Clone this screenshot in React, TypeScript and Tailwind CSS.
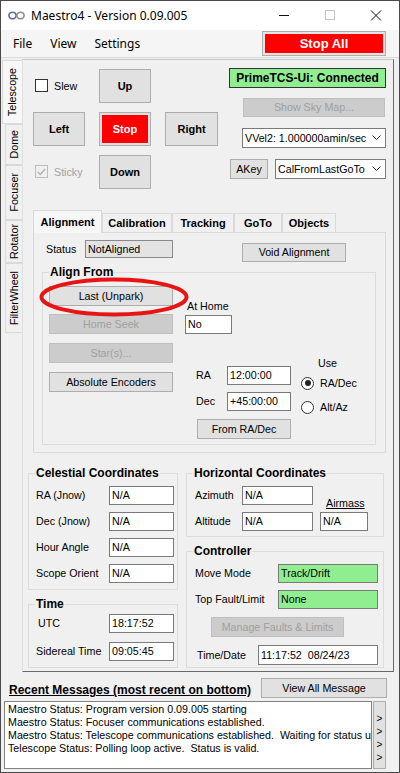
import type { ReactNode } from "react";

const ui = "font-['Liberation_Sans',Arial,sans-serif]";
const seg = "font-['Noto_Sans','Open_Sans',sans-serif]";

function Btn({
  children,
  className = "",
  disabled,
  bold,
}: {
  children: ReactNode;
  className?: string;
  disabled?: boolean;
  bold?: boolean;
}) {
  const tone = disabled
    ? "bg-[#cccccc] border-[#bfbfbf] text-[#a0a0a0]"
    : "bg-[#e1e1e1] border-[#adadad] text-black";
  return (
    <button
      type="button"
      className={`flex shrink-0 items-center justify-center border leading-none ${bold ? "text-[11px] font-bold" : "text-[10.7px]"} ${tone} ${className}`}
    >
      {children}
    </button>
  );
}

function Box({
  children,
  className = "",
}: {
  children: ReactNode;
  className?: string;
}) {
  return (
    <div
      className={`flex shrink-0 items-center overflow-hidden whitespace-nowrap border border-[#7a7a7a] bg-white pl-[2px] text-[10.7px] ${className}`}
    >
      {children}
    </div>
  );
}

function Chevron() {
  return (
    <svg width="9" height="6" viewBox="0 0 9 6" className="ml-auto mr-[4px] shrink-0">
      <path d="M0.5 0.5 L4.5 4.5 L8.5 0.5" fill="none" stroke="#333" strokeWidth="1" />
    </svg>
  );
}

function Combo({ text, className = "" }: { text: string; className?: string }) {
  return (
    <Box className={className}>
      <span>{text}</span>
      <Chevron />
    </Box>
  );
}

function Group({
  title,
  className = "",
  children,
}: {
  title: string;
  className?: string;
  children: ReactNode;
}) {
  return (
    <fieldset className={`shrink-0 border border-[#dcdcdc] ${className}`}>
      <legend className="ml-[6px] px-[1px] text-[12px] font-bold leading-[14px]">
        {title}
      </legend>
      {children}
    </fieldset>
  );
}

function Row({
  label,
  labelW,
  ml,
  children,
  className = "",
}: {
  label: string;
  labelW: string;
  ml: string;
  children: ReactNode;
  className?: string;
}) {
  return (
    <div className={`flex items-center ${className}`}>
      <span className={`${ml} ${labelW} shrink-0 text-[10.7px]`}>{label}</span>
      {children}
    </div>
  );
}

function Check({ label, checked, disabled }: { label: string; checked?: boolean; disabled?: boolean }) {
  return (
    <div className={`flex items-center ${disabled ? "text-[#a0a0a0]" : ""}`}>
      <div
        className={`flex h-[13px] w-[13px] items-center justify-center border ${disabled ? "border-[#bcbcbc] bg-[#f0f0f0]" : "border-[#333] bg-white"}`}
      >
        {checked && (
          <svg width="9" height="8" viewBox="0 0 9 8">
            <path d="M0.8 4 L3.3 6.5 L8.2 1" fill="none" stroke={disabled ? "#b0b0b0" : "#333"} strokeWidth="1.4" />
          </svg>
        )}
      </div>
      <span className="ml-[6px] text-[10.7px]">{label}</span>
    </div>
  );
}

function Radio({ label, checked }: { label: string; checked?: boolean }) {
  return (
    <div className="flex h-[14px] items-center">
      <div className="flex h-[13px] w-[13px] items-center justify-center rounded-full border border-[#333] bg-white">
        {checked && <div className="h-[6px] w-[6px] rounded-full bg-[#222]" />}
      </div>
      <span className="ml-[6px] text-[10.7px]">{label}</span>
    </div>
  );
}

function SideTab({ label, h, selected }: { label: string; h: string; selected?: boolean }) {
  return (
    <div
      className={`flex shrink-0 items-center justify-center border border-r-0 border-[#d9d9d9] ${h} ${selected ? "w-[20px] bg-[#f7f7f7]" : "ml-[3px] w-[17px] bg-[#f0f0f0]"}`}
    >
      <span className="rotate-180 text-[10.7px] leading-none [writing-mode:vertical-rl]">{label}</span>
    </div>
  );
}

function TopTab({ label, w, selected }: { label: string; w: string; selected?: boolean }) {
  return (
    <div
      className={`flex shrink-0 items-center justify-center border border-b-0 border-[#d9d9d9] text-[11px] font-bold ${w} ${selected ? "relative z-10 -mb-px h-[23px] bg-[#f7f7f7]" : "h-[19px] bg-[#f0f0f0]"}`}
    >
      {label}
    </div>
  );
}

export default function App() {
  return (
    <div className={`flex h-[773px] w-[400px] flex-col overflow-hidden border border-[#4a4a4a] bg-[#f0f0f0] text-black ${ui}`}>
      {/* title bar */}
      <div className={`flex h-[29px] shrink-0 items-center bg-white ${seg}`}>
        <svg width="18" height="9" viewBox="0 0 18 9" className="ml-[7px]">
          <ellipse cx="4.5" cy="4.5" rx="3.6" ry="3.3" fill="none" stroke="#5d6f92" strokeWidth="1.6" />
          <ellipse cx="12.5" cy="4.5" rx="3.6" ry="3.3" fill="none" stroke="#8a8f99" strokeWidth="1.6" />
        </svg>
        <span className="ml-[5px] text-[12px]">Maestro4 - Version 0.09.005</span>
        <div className="ml-auto flex h-full items-center">
          <svg width="46" height="29" viewBox="0 0 46 29">
            <path d="M18 14.5 H28" stroke="#111" strokeWidth="1" />
          </svg>
          <svg width="46" height="29" viewBox="0 0 46 29">
            <rect x="18.5" y="9.5" width="9" height="9" fill="none" stroke="#c4c4c4" strokeWidth="1" />
          </svg>
          <svg width="46" height="29" viewBox="0 0 46 29">
            <path d="M18 9.5 L28 19.5 M28 9.5 L18 19.5" stroke="#111" strokeWidth="1" />
          </svg>
        </div>
      </div>

      {/* menu bar */}
      <div className={`flex h-[28px] shrink-0 items-center border-b border-[#dadada] bg-[#f5f5f5] text-[12px] ${seg}`}>
        <span className="ml-[12px]">File</span>
        <span className="ml-[18px]">View</span>
        <span className="ml-[18px]">Settings</span>
        <div className={`ml-auto mr-[13px] flex h-[25px] w-[124px] items-center border border-[#adadad] bg-[#e5e5e5] p-[2px] ${ui}`}>
          <div className="flex h-full w-full items-center justify-center bg-[#ff0000] text-[13px] font-bold text-white">
            Stop All
          </div>
        </div>
      </div>

      {/* body */}
      <div className="flex h-[614px] shrink-0 pt-px">
        <div className="flex w-[21px] shrink-0 flex-col pl-px pt-px">
          <SideTab label="Telescope" h="h-[64px]" selected />
          <SideTab label="Dome" h="h-[41px]" />
          <SideTab label="Focuser" h="h-[55px]" />
          <SideTab label="Rotator" h="h-[43px]" />
          <SideTab label="FilterWheel" h="h-[70px]" />
        </div>

        <div className="flex h-[613px] w-[372px] shrink-0 flex-col border border-l-[#e0e0e0] border-t-[#c8c8c8] border-r-[#696969] border-b-[#696969]">
          {/* top controls */}
          <div className="flex h-[150px] shrink-0 items-start">
            <div className="ml-[10px] mt-[9px] grid grid-cols-[52px_52px_53px] grid-rows-[34px_34px_34px] gap-x-[14px] gap-y-[9px]">
              <div className="flex items-center pl-[2px]">
                <Check label="Slew" />
              </div>
              <Btn bold>Up</Btn>
              <div />
              <Btn bold>Left</Btn>
              <div className="flex border border-[#adadad] bg-[#e1e1e1] p-[2px]">
                <div className="flex flex-1 items-center justify-center bg-[#ff0000] text-[11px] font-bold text-white">
                  Stop
                </div>
              </div>
              <Btn bold>Right</Btn>
              <div className="flex items-center pl-[2px]">
                <Check label="Sticky" checked disabled />
              </div>
              <Btn bold>Down</Btn>
              <div />
            </div>

            <div className="ml-[11px] mt-[8px] flex w-[157px] flex-col items-end">
              <div className="flex h-[20px] w-[157px] items-center justify-center border border-[#333] bg-[#90ee90] text-[12px] font-bold">
                PrimeTCS-Ui: Connected
              </div>
              <Btn disabled className="mr-px mt-[10px] h-[19px] w-[142px]">
                Show Sky Map...
              </Btn>
              <Combo text="VVel2: 1.000000amin/sec" className="mt-[11px] h-[20px] w-[144px]" />
              <div className="mt-[11px] flex w-[157px] items-center">
                <Btn className="ml-px h-[20px] w-[38px]">AKey</Btn>
                <Combo text="CalFromLastGoTo" className="ml-[7px] h-[20px] w-[111px]" />
              </div>
            </div>
          </div>

          {/* tab control */}
          <div className="ml-[10px] flex w-[353px] shrink-0 flex-col">
            <div className="flex h-[22px] items-end">
              <TopTab label="Alignment" w="w-[69px]" selected />
              <TopTab label="Calibration" w="w-[70px]" />
              <TopTab label="Tracking" w="w-[62px]" />
              <TopTab label="GoTo" w="w-[48px]" />
              <TopTab label="Objects" w="w-[54px]" />
            </div>
            <div className="relative flex h-[221px] flex-col border border-[#d9d9d9] bg-[#f0f0f0]">
              <div className="mt-[7px] flex items-start">
                <span className="ml-[12px] flex h-[18px] w-[39px] items-center text-[10.7px]">Status</span>
                <div className="flex h-[18px] w-[88px] items-center border border-[#8a8a8a] bg-[#e3e3e3] pl-[2px] text-[10.7px]">
                  NotAligned
                </div>
                <Btn className="ml-[69px] mt-[3px] h-[19px] w-[104px]">Void Alignment</Btn>
              </div>

              <Group title="Align From" className="ml-[8px] mt-[3px] h-[180px] w-[334px]">
                <div className="flex">
                  <div className="ml-[6px] mt-[7px] flex flex-col">
                    <Btn className="h-[20px] w-[124px]">Last (Unpark)</Btn>
                    <Btn disabled className="mt-[8px] h-[20px] w-[124px]">
                      Home Seek
                    </Btn>
                    <Btn disabled className="mt-[9px] h-[20px] w-[124px]">
                      Star(s)...
                    </Btn>
                    <Btn className="mt-[9px] h-[20px] w-[124px]">Absolute Encoders</Btn>
                  </div>
                  <div className="ml-[12px] flex w-[106px] flex-col">
                    <span className="ml-[2px] mt-[20px] text-[10.7px] leading-[14px]">At Home</span>
                    <Box className="mt-[2px] h-[19px] w-[47px]">No</Box>
                    <Row label="RA" labelW="w-[31px]" ml="ml-[11px]" className="mt-[32px]">
                      <Box className="h-[19px] w-[64px]">12:00:00</Box>
                    </Row>
                    <Row label="Dec" labelW="w-[31px]" ml="ml-[11px]" className="mt-[7px]">
                      <Box className="h-[19px] w-[64px]">+45:00:00</Box>
                    </Row>
                    <Btn className="ml-[12px] mt-[8px] h-[20px] w-[94px]">From RA/Dec</Btn>
                  </div>
                  <div className="ml-[10px] flex flex-col">
                    <span className="ml-[17px] mt-[77px] text-[10.7px] leading-[14px]">Use</span>
                    <div className="mt-[6px]">
                      <Radio label="RA/Dec" checked />
                    </div>
                    <div className="mt-[10px]">
                      <Radio label="Alt/Az" />
                    </div>
                  </div>
                </div>
              </Group>

              <svg
                width="152"
                height="42"
                viewBox="0 0 152 42"
                className="pointer-events-none absolute left-[4px] top-[43px]"
              >
                <ellipse cx="76" cy="21" rx="72.5" ry="17.5" fill="none" stroke="#e81414" strokeWidth="4" />
              </svg>
            </div>
          </div>

          {/* lower groups */}
          <div className="ml-[5px] mt-[13px] flex">
            <div className="flex w-[150px] flex-col">
              <Group title="Celestial Coordinates" className="h-[124px] w-[150px]">
                <div className="flex flex-col">
                  <Row label="RA (Jnow)" labelW="w-[73px]" ml="ml-[7px]" className="mt-[6px]">
                    <Box className="h-[19px] w-[65px]">N/A</Box>
                  </Row>
                  <Row label="Dec (Jnow)" labelW="w-[73px]" ml="ml-[7px]" className="mt-[7px]">
                    <Box className="h-[19px] w-[65px]">N/A</Box>
                  </Row>
                  <Row label="Hour Angle" labelW="w-[73px]" ml="ml-[7px]" className="mt-[7px]">
                    <Box className="h-[19px] w-[65px]">N/A</Box>
                  </Row>
                  <Row label="Scope Orient" labelW="w-[73px]" ml="ml-[7px]" className="mt-[7px]">
                    <Box className="h-[19px] w-[65px]">N/A</Box>
                  </Row>
                </div>
              </Group>
              <Group title="Time" className="mt-[7px] h-[71px] w-[150px]">
                <div className="flex flex-col">
                  <Row label="UTC" labelW="w-[71px]" ml="ml-[9px]" className="mt-[3px]">
                    <Box className="h-[19px] w-[65px]">18:17:52</Box>
                  </Row>
                  <Row label="Sidereal Time" labelW="w-[73px]" ml="ml-[7px]" className="mt-[9px]">
                    <Box className="h-[19px] w-[65px]">09:05:45</Box>
                  </Row>
                </div>
              </Group>
            </div>

            <div className="ml-[8px] flex w-[198px] flex-col">
              <Group title="Horizontal Coordinates" className="h-[71px] w-[198px]">
                <div className="flex">
                  <div className="flex flex-col">
                    <Row label="Azimuth" labelW="w-[47px]" ml="ml-[8px]" className="mt-[6px]">
                      <Box className="h-[19px] w-[71px]">N/A</Box>
                    </Row>
                    <Row label="Altitude" labelW="w-[47px]" ml="ml-[8px]" className="mt-[7px]">
                      <Box className="h-[19px] w-[71px]">N/A</Box>
                    </Row>
                  </div>
                  <div className="ml-[7px] flex flex-col">
                    <span className="ml-[6px] mt-[16px] text-[10.7px] leading-[14px] underline">Airmass</span>
                    <Box className="mt-[2px] h-[19px] w-[48px]">N/A</Box>
                  </div>
                </div>
              </Group>
              <Group title="Controller" className="mt-[7px] h-[124px] w-[198px]">
                <div className="flex flex-col">
                  <Row label="Move Mode" labelW="w-[83px]" ml="ml-[8px]" className="mt-[6px]">
                    <Box className="h-[19px] w-[100px] !bg-[#90ee90]">Track/Drift</Box>
                  </Row>
                  <Row label="Top Fault/Limit" labelW="w-[83px]" ml="ml-[8px]" className="mt-[7px]">
                    <Box className="h-[19px] w-[100px] !bg-[#90ee90]">None</Box>
                  </Row>
                  <Btn disabled className="ml-[24px] mt-[8px] h-[20px] w-[133px]">
                    Manage Faults &amp; Limits
                  </Btn>
                  <Row label="Time/Date" labelW="w-[61px]" ml="ml-[10px]" className="mt-[8px]">
                    <Box className="h-[20px] w-[120px]">11:17:52&nbsp; 08/24/23</Box>
                  </Row>
                </div>
              </Group>
            </div>
          </div>
        </div>
      </div>

      {/* recent messages */}
      <div className="mt-[6px] flex h-[20px] shrink-0 items-start">
        <span className="ml-[8px] mt-[5px] text-[12px] font-bold leading-[14px] underline">
          Recent Messages (most recent on bottom)
        </span>
        <Btn className="ml-auto mr-[12px] h-[20px] w-[126px]">View All Message</Btn>
      </div>
      <div className="mt-[3px] flex h-[68px] shrink-0">
        <div className="ml-[3px] w-[368px] overflow-hidden whitespace-nowrap border border-[#828282] bg-white pl-[3px] pt-px text-[10.7px] leading-[13px]">
          <div>Maestro Status: Program version 0.09.005 starting</div>
          <div>Maestro Status: Focuser communications established.</div>
          <div>Maestro Status: Telescope communications established.&nbsp; Waiting for status update</div>
          <div>Telescope Status: Polling loop active.&nbsp; Status is valid.</div>
        </div>
        <div className="ml-px flex w-[13px] flex-col items-center border border-[#adadad] bg-[#e1e1e1] pt-[10px] text-[10px] leading-[13px]">
          <span className="h-[13px]">&gt;</span>
          <span className="h-[13px]">&gt;</span>
          <span className="h-[13px]">&gt;</span>
          <span className="h-[13px]">&gt;</span>
        </div>
      </div>
    </div>
  );
}
